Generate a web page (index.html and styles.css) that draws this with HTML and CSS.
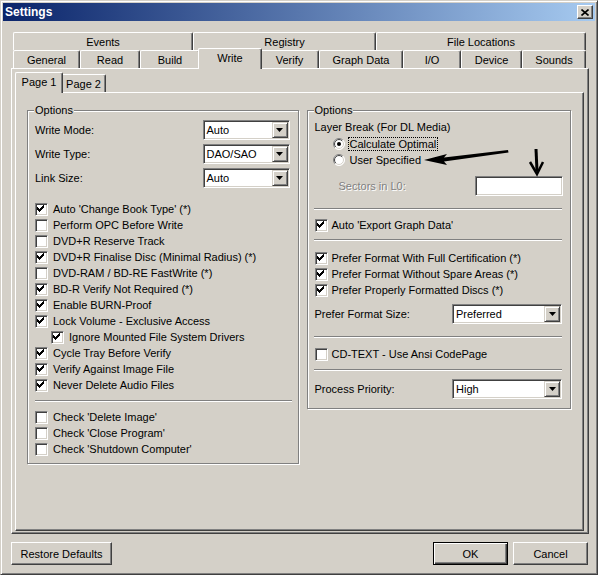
FILE: index.html
```html
<!DOCTYPE html>
<html>
<head>
<meta charset="utf-8">
<title>Settings</title>
<link rel="stylesheet" href="styles.css">
</head>
<body>
<svg class="defs" width="0" height="0">
  <defs>
    <symbol id="chk" viewBox="0 0 11 11"><path d="M1 3h1v3h-1z M2 4h1v3h-1z M3 5h1v3h-1z M4 4h1v3h-1z M5 3h1v3h-1z M6 2h1v3h-1z M7 1h1v3h-1z" fill="#000" shape-rendering="crispEdges"/></symbol>
    <linearGradient id="ro" x1="0" y1="0" x2="1" y2="1"><stop offset="0.5" stop-color="#808080"/><stop offset="0.5" stop-color="#ffffff"/></linearGradient>
    <linearGradient id="ri" x1="0" y1="0" x2="1" y2="1"><stop offset="0.5" stop-color="#404040"/><stop offset="0.5" stop-color="#d4d0c8"/></linearGradient>
    <symbol id="tri" viewBox="0 0 7 4"><path d="M0 0h7l-3.5 4z" fill="#000"/></symbol>
  </defs>
</svg>
<div class="window">
  <div class="titlebar">
    <span class="title">Settings</span>
    <span class="close"><svg width="8" height="7" viewBox="0 0 8 7"><path d="M0.5 0.5 L7.5 6.5 M7.5 0.5 L0.5 6.5" stroke="#000" stroke-width="1.6"/></svg></span>
  </div>

  <div class="tabctl">
    <div class="tabrow">
      <div class="tab w-events">Events</div>
      <div class="tab w-registry">Registry</div>
      <div class="tab w-fileloc">File Locations</div>
    </div>
    <div class="tabrow">
      <div class="tab w-general">General</div>
      <div class="tab w-read">Read</div>
      <div class="tab w-build">Build</div>
      <div class="tab w-write sel">Write</div>
      <div class="tab w-verify">Verify</div>
      <div class="tab w-graph">Graph Data</div>
      <div class="tab w-io">I/O</div>
      <div class="tab w-device">Device</div>
      <div class="tab w-sounds">Sounds</div>
    </div>
    <div class="panel outer">
      <div class="innertabs">
        <div class="tabrow pages">
          <div class="tab w-page1 sel">Page 1</div>
          <div class="tab w-page2">Page 2</div>
        </div>
        <div class="panel inner">
          <div class="groups">
            <div class="group left">
              <span class="legend">Options</span>
              <div class="frow"><span>Write Mode:</span><span class="combo c-left"><span class="val">Auto</span><span class="ddbtn"><svg width="7" height="4"><use href="#tri"/></svg></span></span></div>
              <div class="frow gap4"><span>Write Type:</span><span class="combo c-left"><span class="val">DAO/SAO</span><span class="ddbtn"><svg width="7" height="4"><use href="#tri"/></svg></span></span></div>
              <div class="frow gap4"><span>Link Size:</span><span class="combo c-left"><span class="val">Auto</span><span class="ddbtn"><svg width="7" height="4"><use href="#tri"/></svg></span></span></div>

              <div class="cblist first">
                <div class="cbrow"><span class="cb"><svg><use href="#chk"/></svg></span><span class="txt">Auto 'Change Book Type' (*)</span></div>
                <div class="cbrow"><span class="cb"></span><span class="txt">Perform OPC Before Write</span></div>
                <div class="cbrow"><span class="cb"></span><span class="txt">DVD+R Reserve Track</span></div>
                <div class="cbrow"><span class="cb"><svg><use href="#chk"/></svg></span><span class="txt">DVD+R Finalise Disc (Minimal Radius) (*)</span></div>
                <div class="cbrow"><span class="cb"></span><span class="txt">DVD-RAM / BD-RE FastWrite (*)</span></div>
                <div class="cbrow"><span class="cb"><svg><use href="#chk"/></svg></span><span class="txt">BD-R Verify Not Required (*)</span></div>
                <div class="cbrow"><span class="cb"><svg><use href="#chk"/></svg></span><span class="txt">Enable BURN-Proof</span></div>
                <div class="cbrow"><span class="cb"><svg><use href="#chk"/></svg></span><span class="txt">Lock Volume - Exclusive Access</span></div>
                <div class="cbrow indent"><span class="cb"><svg><use href="#chk"/></svg></span><span class="txt">Ignore Mounted File System Drivers</span></div>
                <div class="cbrow"><span class="cb"><svg><use href="#chk"/></svg></span><span class="txt">Cycle Tray Before Verify</span></div>
                <div class="cbrow"><span class="cb"><svg><use href="#chk"/></svg></span><span class="txt">Verify Against Image File</span></div>
                <div class="cbrow"><span class="cb"><svg><use href="#chk"/></svg></span><span class="txt">Never Delete Audio Files</span></div>
              </div>
              <div class="sep sep-l"></div>
              <div class="cblist">
                <div class="cbrow"><span class="cb"></span><span class="txt">Check 'Delete Image'</span></div>
                <div class="cbrow"><span class="cb"></span><span class="txt">Check 'Close Program'</span></div>
                <div class="cbrow"><span class="cb"></span><span class="txt">Check 'Shutdown Computer'</span></div>
              </div>
            </div>

            <div class="group right">
              <span class="legend">Options</span>
              <div class="plain">Layer Break (For DL Media)</div>
              <div class="rrow"><svg class="radio" width="12" height="12" viewBox="0 0 12 12"><circle cx="6" cy="6" r="5.5" fill="#fff" stroke="url(#ro)"/><circle cx="6" cy="6" r="4.5" fill="#fff" stroke="url(#ri)"/><circle cx="6" cy="6" r="2" fill="#000"/></svg><span class="focus">Calculate Optimal</span></div>
              <div class="rrow"><svg class="radio" width="12" height="12" viewBox="0 0 12 12"><circle cx="6" cy="6" r="5.5" fill="#fff" stroke="url(#ro)"/><circle cx="6" cy="6" r="4.5" fill="#fff" stroke="url(#ri)"/></svg><span class="rtxt">User Specified</span></div>
              <div class="frow sectors"><span class="disabled">Sectors in L0:</span><span class="textbox"></span></div>
              <div class="sep s1"></div>
              <div class="cbrow"><span class="cb r"><svg><use href="#chk"/></svg></span><span class="txt">Auto 'Export Graph Data'</span></div>
              <div class="sep s2"></div>
              <div class="cbrow"><span class="cb r"><svg><use href="#chk"/></svg></span><span class="txt">Prefer Format With Full Certification (*)</span></div>
              <div class="cbrow"><span class="cb r"><svg><use href="#chk"/></svg></span><span class="txt">Prefer Format Without Spare Areas (*)</span></div>
              <div class="cbrow"><span class="cb r"><svg><use href="#chk"/></svg></span><span class="txt">Prefer Properly Formatted Discs (*)</span></div>
              <div class="frow gap5"><span>Prefer Format Size:</span><span class="combo c-right"><span class="val">Preferred</span><span class="ddbtn"><svg width="7" height="4"><use href="#tri"/></svg></span></span></div>
              <div class="sep s3"></div>
              <div class="cbrow"><span class="cb r"></span><span class="txt">CD-TEXT - Use Ansi CodePage</span></div>
              <div class="sep s4"></div>
              <div class="frow"><span>Process Priority:</span><span class="combo c-right"><span class="val">High</span><span class="ddbtn"><svg width="7" height="4"><use href="#tri"/></svg></span></span></div>
            </div>
          </div>
        </div>
      </div>
    </div>
  </div>

  <div class="buttons">
    <div class="btn restore">Restore Defaults</div>
    <div class="btn ok">OK</div>
    <div class="btn cancel">Cancel</div>
  </div>

  <svg class="annot" width="598" height="575" viewBox="0 0 598 575">
    <path d="M424 160 L447 154 L444 157.5 L508 150 L508.5 152.5 L444 161.5 L447 165 Z" fill="#000"/>
    <path d="M536 149 L537 171" stroke="#000" stroke-width="3" fill="none"/>
    <path d="M530 162 L537 174 L543 162" stroke="#000" stroke-width="2.5" fill="none" stroke-linejoin="miter"/>
  </svg>
</div>
</body>
</html>
```

FILE: styles.css
```css
* { box-sizing: border-box; }
html, body { margin: 0; padding: 0; }
body {
  background: #d4d0c8;
  font-family: "Liberation Sans", Arial, sans-serif;
  font-size: 11px;
  color: #000;
}
.defs { position: absolute; width: 0; height: 0; }

.window {
  position: relative;
  width: 598px;
  height: 575px;
  border: 1px solid;
  border-color: #d4d0c8 #404040 #404040 #d4d0c8;
  box-shadow: inset 1px 1px #fff, inset -1px -1px #808080;
  padding: 2px;
}

.titlebar {
  height: 18px;
  background: linear-gradient(to right, #0a246a, #a6caf0);
  display: flex;
  align-items: center;
  justify-content: space-between;
  padding: 0 2px 0 2px;
}
.title { color: #fff; font-weight: bold; font-size: 12px; }
.close {
  width: 16px;
  height: 14px;
  background: #d4d0c8;
  border: 1px solid;
  border-color: #fff #404040 #404040 #fff;
  box-shadow: inset -1px -1px #808080;
  display: flex;
  align-items: center;
  justify-content: center;
}
.close svg { display: block; }

/* tab control */
.tabctl { margin: 11px 0 0 8px; width: 578px; }
.tabrow { display: flex; height: 18px; padding-left: 2px; }
.tab {
  height: 18px;
  flex: none;
  background: #d4d0c8;
  border-top: 1px solid #fff;
  border-left: 1px solid #fff;
  border-right: 1px solid #404040;
  box-shadow: inset -1px 0 #808080;
  border-radius: 2px 2px 0 0;
  text-align: center;
  line-height: 16px;
  padding-top: 1px;
  white-space: nowrap;
}
.tab.sel {
  position: relative;
  z-index: 2;
  height: 21px;
  margin: -2px -2px -1px -2px;
}
.w-events { width: 180px; }
.w-registry { width: 183px; }
.w-fileloc { width: 210px; }
.w-general { width: 67px; }
.w-read { width: 60px; }
.w-build { width: 60px; }
.w-write { width: 64px; }
.w-verify { width: 59px; }
.w-graph { width: 84px; }
.w-io { width: 58px; }
.w-device { width: 61px; }
.w-sounds { width: 64px; }
.w-page1 { width: 48px; }
.w-page2 { width: 45px; }

.panel {
  position: relative;
  z-index: 1;
  background: #d4d0c8;
  border: 1px solid;
  border-color: #fff #404040 #404040 #fff;
  box-shadow: inset -1px -1px #808080;
}
.panel.outer { height: 466px; padding: 3px 4px 2px 3px; }
.innertabs { height: 459px; }
.tabrow.pages { margin-top: 2px; }
.panel.inner { height: 439px; padding: 17px 12px 0 11px; }

.groups { display: flex; gap: 8px; align-items: flex-start; }
.group {
  position: relative;
  border: 1px solid #808080;
  box-shadow: inset 1px 1px #fff, 1px 1px #fff;
  padding: 9px 8px 5px 7px;
}
.group.left { width: 272px; }
.group.right { width: 265px; padding-bottom: 9px; }
.legend {
  position: absolute;
  top: -7px;
  left: 6px;
  padding: 0 1px;
  background: #d4d0c8;
  line-height: 13px;
}

.frow {
  display: flex;
  align-items: center;
  justify-content: space-between;
  height: 20px;
}
.gap4 { margin-top: 4px; }
.gap5 { margin-top: 5px; }

.combo {
  height: 20px;
  background: #fff;
  border: 1px solid;
  border-color: #808080 #fff #fff #808080;
  box-shadow: inset 1px 1px #404040, inset -1px -1px #d4d0c8;
  display: flex;
  align-items: center;
  padding: 1px;
}
.c-left { width: 87px; }
.c-right { width: 110px; }
.combo .val { flex: 1; padding-left: 2px; white-space: nowrap; }
.ddbtn {
  width: 16px;
  height: 16px;
  flex: none;
  background: #d4d0c8;
  border: 1px solid;
  border-color: #d4d0c8 #404040 #404040 #d4d0c8;
  box-shadow: inset 1px 1px #fff, inset -1px -1px #808080;
  display: flex;
  align-items: center;
  justify-content: center;
}
.ddbtn svg { display: block; }

.cblist.first { margin-top: 14px; }
.cbrow { display: flex; align-items: flex-start; height: 16px; white-space: nowrap; }
.cbrow.indent { padding-left: 16px; }
.cb {
  width: 13px;
  height: 13px;
  flex: none;
  margin-top: 1px;
  margin-right: 5px;
  background: #fff;
  border: 1px solid;
  border-color: #808080 #fff #fff #808080;
  box-shadow: inset 1px 1px #404040, inset -1px -1px #d4d0c8;
}
.cb.r { margin-right: 4px; }
.cb svg { display: block; width: 11px; height: 11px; }
.cbrow .txt { line-height: 15px; }

.sep {
  height: 2px;
  border-top: 1px solid #808080;
  border-bottom: 1px solid #fff;
}
.sep-l { margin: 6px -2px 8px 0; }
.s1 { margin: 12px 0 8px -1px; }
.s2 { margin: 5px 0 10px -1px; }
.s3 { margin: 12px 0 9px -1px; }
.s4 { margin: 6px 0 8px -1px; }

.plain { height: 16px; line-height: 14px; }
.rrow { display: flex; align-items: center; height: 16px; padding-left: 18px; white-space: nowrap; }
.radio { display: block; flex: none; margin-right: 3px; }
.focus { border: 1px dotted #000; padding: 0 1px; line-height: 12px; }
.rtxt { padding-left: 2px; }

.sectors { margin-top: 8px; padding-left: 24px; }
.disabled { color: #808080; text-shadow: 1px 1px #fff; }
.textbox {
  width: 88px;
  height: 20px;
  margin-right: -1px;
  background: #fff;
  border: 1px solid;
  border-color: #808080 #fff #fff #808080;
  box-shadow: inset 1px 1px #404040, inset -1px -1px #d4d0c8;
}

.buttons { display: flex; margin: 8px 7px 0 8px; }
.btn {
  height: 23px;
  background: #d4d0c8;
  border: 1px solid;
  border-color: #fff #404040 #404040 #fff;
  box-shadow: inset -1px -1px #808080;
  display: flex;
  align-items: center;
  justify-content: center;
  white-space: nowrap;
}
.btn.restore { width: 101px; }
.btn.ok {
  width: 75px;
  margin-left: auto;
  border: 1px solid #000;
  box-shadow: inset 1px 1px #fff, inset -1px -1px #404040, inset -2px -2px #808080;
}
.btn.cancel { width: 75px; margin-left: 5px; }

.annot {
  position: absolute;
  left: -1px;
  top: -1px;
  pointer-events: none;
  z-index: 5;
}
```
